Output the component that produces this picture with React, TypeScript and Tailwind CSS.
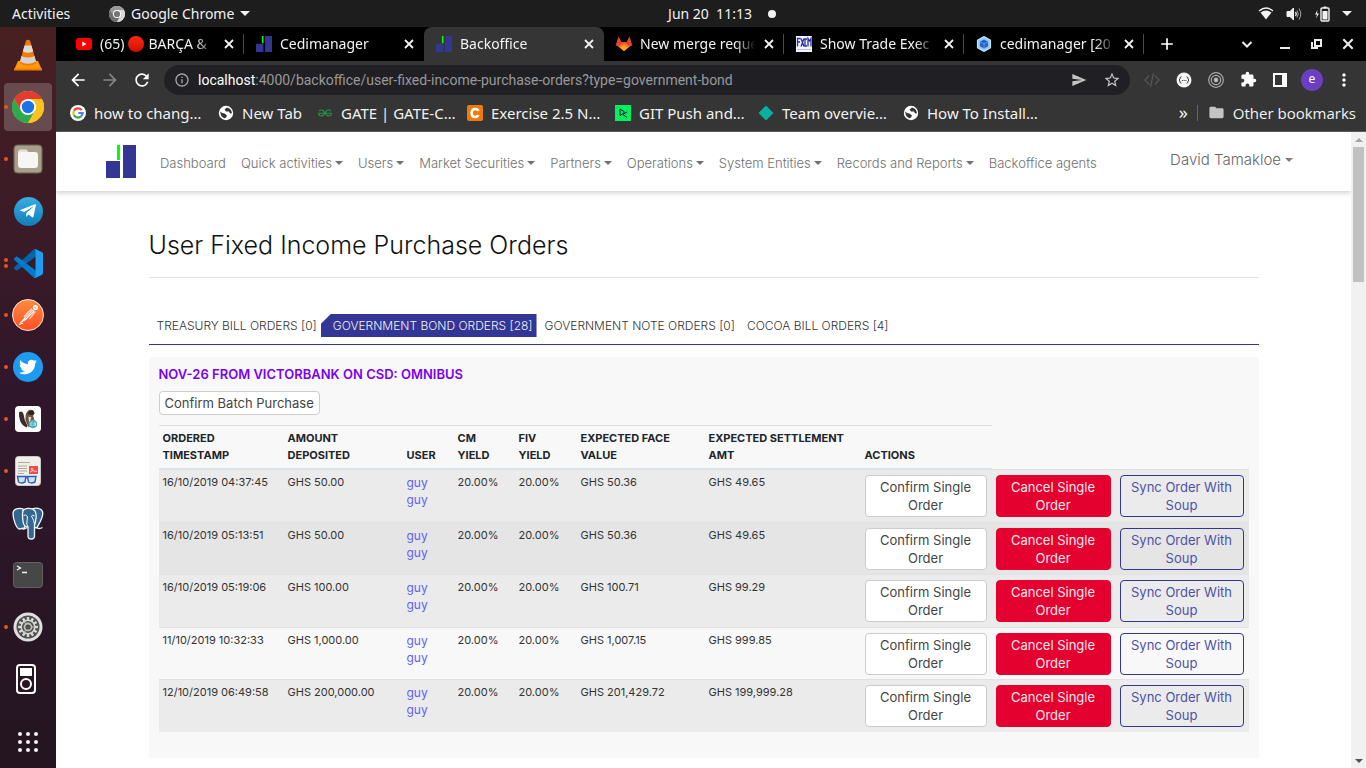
import type { ReactNode } from "react";
import {
  MdAdd,
  MdArrowBack,
  MdArrowForward,
  MdExtension,
  MdFolder,
  MdInfoOutline,
  MdMoreVert,
  MdRefresh,
  MdSend,
  MdStarBorder,
} from "react-icons/md";
import { FaTwitter, FaTelegramPlane } from "react-icons/fa";
import { SiGeeksforgeeks } from "react-icons/si";

/* ---------- drawings ---------- */

function CediLogo({ className }: { className: string }) {
  return (
    <svg viewBox="0 0 30 33" preserveAspectRatio="none" className={className} aria-hidden="true">
      <rect x="0" y="16" width="14" height="17" fill="#333694" />
      <rect x="17" y="0" width="13" height="33" fill="#333694" />
      <rect x="11" y="0" width="3" height="15" fill="#0f0" />
    </svg>
  );
}

function CloseIcon({ className }: { className: string }) {
  return (
    <svg viewBox="0 0 12 12" className={className} stroke="currentColor" strokeWidth="1.800" aria-hidden="true">
      <path d="M2 2 10 10M10 2 2 10" />
    </svg>
  );
}

function ChromeLogo({ className, mono = false }: { className: string; mono?: boolean }) {
  const [red, yellow, green, blue] = mono
    ? ["#9a9a9a", "#d8d8d8", "#6f6f6f", "#777"]
    : ["#e33b2e", "#fcc31e", "#2da94f", "#1a73e8"];
  return (
    <svg viewBox="0 0 48 48" className={className} aria-hidden="true">
      <circle cx="24" cy="24" r="24" fill={yellow} />
      <path d="M24 24 44.8 12A24 24 0 0 0 3.2 12L13.6 30Z" fill={red} />
      <path d="M3.2 12A24 24 0 0 0 24 48L34.4 30 24 24 13.6 30Z" fill={green} />
      <path d="M24 12H44.8A24 24 0 0 1 24 48L34.4 30Z" fill={yellow} />
      <circle cx="24" cy="24" r="12" fill="#fff" />
      <circle cx="24" cy="24" r="9.3" fill={blue} />
    </svg>
  );
}

function VlcIcon() {
  return (
    <svg viewBox="0 0 30 32" className="h-8 w-[30px]" aria-hidden="true">
      <path d="M5 22H25L29 31H1Z" fill="#ff9a0e" />
      <path d="M1 29.5H29V31.5H1Z" fill="#f57c00" />
      <path d="M13 1.500Q15 0 17 1.500L23.500 24Q15 29 6.500 24Z" fill="#f57900" />
      <path d="M11.600 6.500H18.400L20.200 12.500Q15 15 9.800 12.500Z" fill="#dcdcdc" />
      <path d="M8.500 17Q15 20 21.500 17L23 22.500Q15 27 7 22.500Z" fill="#d3d3d3" />
    </svg>
  );
}

function FilesIcon() {
  return (
    <svg viewBox="0 0 30 30" className="size-[30px]" aria-hidden="true">
      <rect x="1" y="1" width="28" height="28" rx="3.500" fill="#9c9480" stroke="#6f6856" />
      <rect x="2" y="2" width="26" height="26" rx="3" fill="#a8a08c" />
      <path d="M6 6.500Q6 5.500 7 5.500H13Q14 5.500 14.500 7H15V12H5V7Z" fill="#e5e0d8" />
      <rect x="5" y="8" width="20" height="16" rx="3" fill="#f8f6f3" />
    </svg>
  );
}

function TelegramIcon() {
  return (
    <span className="flex size-[29px] items-center justify-center rounded-full bg-linear-to-b from-[#37aee2] to-[#0f7dba] text-white">
      <FaTelegramPlane size={18} />
    </span>
  );
}

function VsCodeIcon() {
  return (
    <svg viewBox="0 0 100 100" className="size-[29px]" aria-hidden="true">
      <path d="M96 11 75 .9a6 6 0 0 0-7 1.200L1.300 62.400a4 4 0 0 0 0 6l5.500 5a4 4 0 0 0 5.300.2L93.400 12.200C96 10 100 12 100 15.500V15a6 6 0 0 0-4-4Z" fill="#0065a9" />
      <path d="M96 89 75 99.100a6 6 0 0 1-7-1.200L1.300 37.600a4 4 0 0 1 0-6l5.500-5a4 4 0 0 1 5.300-.2L93.400 87.800C96 90 100 88 100 84.500V85a6 6 0 0 1-4 4Z" fill="#007acc" />
      <path d="M75 99.100a6 6 0 0 1-7-1.200c2.300 2.300 6.300.7 6.300-2.600V4.700c0-3.300-4-5-6.300-2.600a6 6 0 0 1 7-1.200L96.500 11A6 6 0 0 1 100 16.700V83.300a6 6 0 0 1-3.500 5.700Z" fill="#1f9cf0" />
    </svg>
  );
}

function PostmanIcon() {
  return (
    <svg viewBox="0 0 32 32" className="size-8" aria-hidden="true">
      <defs>
        <linearGradient id="postman" x1="0" y1="0" x2="0" y2="1">
          <stop offset="0" stopColor="#ff8c3e" />
          <stop offset="1" stopColor="#ff4f27" />
        </linearGradient>
      </defs>
      <circle cx="16" cy="16" r="15.500" fill="url(#postman)" stroke="#f6e7e0" />
      <circle cx="23.500" cy="8.500" r="2.600" fill="#fff" />
      <path d="M7 25 12.500 18.500 20.500 10.500 22.800 12.300 14.500 20.500Z" fill="#fff" />
      <path d="M12 17.500 20 9.500M17.500 20 23.500 12.500" stroke="#ffe3d6" strokeWidth="1.200" fill="none" />
      <path d="M13.500 19 20.800 12" stroke="#ff6c37" strokeWidth=".8" />
      <path d="M7 25.500 11 24" stroke="#fff" strokeWidth="1.200" />
      <path d="m22.500 8.500 1.800 1" stroke="#ff6c37" strokeWidth="1" />
    </svg>
  );
}

function TwitterIcon() {
  return (
    <span className="flex size-[30px] items-center justify-center rounded-full bg-[#1d9bf0] text-white">
      <FaTwitter size={18} />
    </span>
  );
}

function BeaverIcon() {
  return (
    <svg viewBox="0 0 26 26" className="size-[26px]" aria-hidden="true">
      <rect width="26" height="26" rx="4" fill="#fff" />
      <path d="M4 6.500Q7 4 8.500 8Q9 14 12.500 19.500L12 21.500Q7 20 5 14.500Q3.600 10 4 6.500Z" fill="#3b2c27" />
      <path d="M10.500 14Q10 6 14 4Q19 3 19.500 7.500L18 10Q20 13 18.500 17L14 21.500 12.500 19Z" fill="#6c5142" />
      <path d="M12.500 8Q14 4 18 4.500L19.500 7.500 17 9Z" fill="#2c211e" />
      <path d="M13.500 10.500 16.500 11.500 14 17.500Z" fill="#e8dccf" />
      <circle cx="18" cy="18" r="4.300" fill="#4cb0bb" />
      <path d="M17.600 16.800H15.800V19.400H17.600M19 16.800V19.400H20.600V16.800Z" stroke="#c8eef1" strokeWidth=".8" fill="none" />
    </svg>
  );
}

function DocumentViewerIcon() {
  return (
    <svg viewBox="0 0 26 30" className="h-[30px] w-[26px]" aria-hidden="true">
      <rect x=".5" y=".5" width="25" height="29" rx="3" fill="#f1efec" stroke="#cbc9c6" />
      <path d="M3 6.500H15M3 10H12M3 12.500H12M3 15H12M3 17.500H9" stroke="#b4ab97" strokeWidth="1.100" />
      <rect x="14" y="10" width="9" height="8" fill="#ee4c44" />
      <path d="M15 16Q17 16 18 14Q18 11.500 16.200 12.500Q16 15 19 15L22 15.500" stroke="#ffd0cc" fill="none" strokeWidth=".9" />
      <path d="M2.500 20.500H11L10 26Q6 28 3.500 26ZM12.500 20.500H21L20 26Q16 28 13.500 26Z" fill="#cfe0f3" stroke="#2c62b4" strokeWidth="1.400" />
      <path d="M10.500 21.500H13" stroke="#2c62b4" strokeWidth="1.500" />
    </svg>
  );
}

function ElephantIcon() {
  return (
    <svg viewBox="0 0 32 33" className="h-[33px] w-8" aria-hidden="true">
      <g fill="#336791" stroke="#f4f7fa" strokeWidth="1.300" strokeLinejoin="round">
        <path d="M8 22C4 22.500 1 11 1 6.500C1 1.500 7 .8 11 1.800L13 20C12 22 9 21 8 22Z" />
        <path d="M20 2C26 0 30.500 2 30.800 6C31 11 27 17 25 20.500L21 21Z" />
        <path d="M11 4C12 1 20 0 23 4C25 7 24 14 22.500 18V29C22.500 33 16 33 16 29V20C13.500 20 11.500 18 11 14.500C10.500 11 10 7 11 4Z" />
      </g>
      <path d="M24 20.500Q27 22.500 30.500 20.500M9.500 21.500Q12 23 15 20.500" stroke="#f4f7fa" strokeWidth="1.400" fill="none" />
      <path d="M11.500 8.500Q13.500 7 15.500 9.500L15 14Q14 17 16 20M22.500 9Q20 7.500 19.500 9Q22.500 14 22.500 18" stroke="#f4f7fa" strokeWidth="1" fill="none" />
    </svg>
  );
}

function TerminalIcon() {
  return (
    <svg viewBox="0 0 30 26" className="h-[26px] w-[30px]" aria-hidden="true">
      <rect x=".5" y=".5" width="29" height="25" rx="3" fill="#474747" stroke="#616161" />
      <path d="m4 4 3.500 2L4 8M9 10.500H14" stroke="#f2f2f2" strokeWidth="1.300" fill="none" />
    </svg>
  );
}

const teeth = Array.from({ length: 12 }, (_, i) => i * 30);

function SettingsIcon() {
  return (
    <svg viewBox="0 0 30 30" className="size-[30px]" aria-hidden="true">
      <circle cx="15" cy="15" r="14.500" fill="#e0e0de" />
      <circle cx="15" cy="15" r="11.500" fill="#4f4f4f" />
      {teeth.map((angle) => (
        <rect key={angle} x="13.800" y="5" width="2.400" height="3.500" fill="#d8d8d6" transform={`rotate(${angle} 15 15)`} />
      ))}
      <circle cx="15" cy="15" r="6.800" fill="none" stroke="#d8d8d6" strokeWidth="1.500" />
      <circle cx="15" cy="15" r="3.500" fill="none" stroke="#bdbdbb" strokeWidth="1.800" />
      <path d="M14 12.500 18 15 14 17.500Z" fill="#4f4f4f" />
      <path d="M18 15H22M13 12 11 9.500M13 18 11 20.500" stroke="#bdbdbb" strokeWidth="1.200" />
    </svg>
  );
}

function PlayerIcon() {
  return (
    <svg viewBox="0 0 20 30" className="-ml-1 h-[30px] w-5" aria-hidden="true">
      <rect x="1" y="1" width="18" height="28" rx="3" fill="none" stroke="#fff" strokeWidth="2" />
      <rect x="4" y="4" width="12" height="8" fill="#fff" />
      <circle cx="10" cy="20" r="5" fill="none" stroke="#fff" strokeWidth="2" />
    </svg>
  );
}

function AppsIcon() {
  return (
    <svg viewBox="0 0 20 20" className="size-5" fill="#f5f5f5" aria-hidden="true">
      {[2, 10, 18].map((x) => [2, 10, 18].map((y) => <circle key={`${x}-${y}`} cx={x} cy={y} r="2" />))}
    </svg>
  );
}

function YoutubeIcon() {
  return (
    <svg viewBox="0 0 16 12" className="h-3 w-4 shrink-0" aria-hidden="true">
      <rect width="16" height="12" rx="3" fill="#f00" />
      <path d="M6.300 3.600V8.400L10.500 6Z" fill="#fff" />
    </svg>
  );
}

function GitlabIcon() {
  return (
    <svg viewBox="0 0 16 16" className="size-4 shrink-0" aria-hidden="true">
      <path d="M8 15 0 9 2.700.8 5 6H11L13.300.8 16 9Z" fill="#fc6d26" />
      <path d="M0 9 2.700.8 5 6H11L13.300.8 16 9 14 10.300 8 6.500 2 10.300Z" fill="#e24329" />
      <path d="M4 11.500 8 8.800 12 11.500 8 15.300Z" fill="#fca326" />
    </svg>
  );
}

function FxcmIcon() {
  return (
    <svg viewBox="0 0 16 16" className="size-4 shrink-0" aria-hidden="true">
      <rect width="16" height="16" fill="#f4f6ff" />
      <path d="M1.500 10.500V2.500H4.500M1.500 6H4M5 2.500 8 10.500M8 2.500 5 10.500M11 3H9V10H11M12 10.500V2.500L13.500 5 15 2.500V10.500" stroke="#2a31a8" strokeWidth="1.300" fill="none" />
      <path d="M1 13.500H15" stroke="#b9bfe6" strokeWidth="1" />
    </svg>
  );
}

function WebpackIcon() {
  return (
    <svg viewBox="0 0 16 16" className="size-4 shrink-0" aria-hidden="true">
      <path d="M8 0 15 4V12L8 16 1 12V4Z" fill="#8fcbfa" />
      <path d="M8 .5 14.600 4.200V11.800L8 15.500 1.400 11.800V4.200Z" stroke="#d9f1fd" strokeWidth=".8" fill="none" />
      <path d="M8 3.500 12 5.800V10.200L8 12.500 4 10.200V5.800Z" fill="#2463c4" />
      <path d="M4 5.800 8 8 12 5.800M8 8V12.500" stroke="#7fa7f0" strokeWidth=".7" fill="none" />
    </svg>
  );
}

function GoogleIcon() {
  return (
    <svg viewBox="0 0 16 16" className="size-4 shrink-0" aria-hidden="true">
      <circle cx="8" cy="8" r="8" fill="#fff" />
      <g fill="none" strokeWidth="2.200">
        <path d="M11.600 5A4.600 4.600 0 0 0 4 5.700" stroke="#ea4335" />
        <path d="M4 5.700A4.600 4.600 0 0 0 4 10.300" stroke="#fbbc05" />
        <path d="M4 10.300A4.600 4.600 0 0 0 10.900 11.500" stroke="#34a853" />
        <path d="M10.900 11.500A4.600 4.600 0 0 0 12.600 8H8.300" stroke="#4285f4" />
      </g>
    </svg>
  );
}

function GlobeIcon() {
  return (
    <svg viewBox="0 0 16 16" className="size-4 shrink-0" aria-hidden="true">
      <circle cx="8" cy="8" r="7.200" fill="#fff" />
      <path d="M2 6.500Q4 8.500 6.500 8.500L9 10.500 8 12.500 6.500 13.200Q3 12 2.500 8.500ZM9 2.500 6.500 4.500 8 6.500H11L12 8.500 14 8.200Q13.500 4.500 11.500 3.500Z" fill="#353535" />
    </svg>
  );
}

function CodecademyIcon() {
  return (
    <svg viewBox="0 0 16 16" className="size-4 shrink-0" aria-hidden="true">
      <rect width="16" height="16" rx="2" fill="#ef7c0a" />
      <path d="M11.500 5.800Q10.500 4 8.200 4Q4.600 4 4.600 8T8.200 12Q10.500 12 11.500 10.200" stroke="#fff" strokeWidth="2.600" fill="none" />
    </svg>
  );
}

function DatacampIcon() {
  return (
    <svg viewBox="0 0 16 16" className="size-4 shrink-0" aria-hidden="true">
      <rect width="16" height="16" fill="#03ef62" />
      <path d="M5 10.500V4L9 6.500V8L5 10.500M12 7 8 9.500 12 12.500" stroke="#05192d" strokeWidth="1" fill="none" />
    </svg>
  );
}

function DiamondIcon() {
  return (
    <svg viewBox="0 0 16 16" className="size-4 shrink-0" aria-hidden="true">
      <path d="M8 .6 15.400 8 8 15.400.6 8Z" fill="#06b1a0" />
    </svg>
  );
}

function Caret({ className = "" }: { className?: string }) {
  return (
    <svg viewBox="0 0 8 4" className={`h-1 w-2 shrink-0 ${className}`} fill="currentColor" aria-hidden="true">
      <path d="M0 0H8L4 4Z" />
    </svg>
  );
}

/* ---------- desktop ---------- */

function TopBar() {
  return (
    <header className="grid h-[27px] shrink-0 grid-cols-[1fr_auto_1fr] items-center bg-[#1d1d1d] px-3 text-sm text-[#f2f2f2]">
      <div className="flex items-center">
        <button type="button" className="w-[97px] text-left">Activities</button>
        <button type="button" className="flex items-center gap-[6px]">
          <ChromeLogo className="size-4" mono />
          Google Chrome
          <svg viewBox="0 0 10 5" className="h-[5px] w-[10px]" fill="currentColor" aria-hidden="true">
            <path d="M0 0H10L5 5Z" />
          </svg>
        </button>
      </div>
      <button type="button" className="flex items-center gap-4 pl-[78px]">
        <span className="whitespace-pre">Jun 20  11:13</span>
        <span className="size-2 rounded-full bg-[#f2f2f2]" />
      </button>
      <button type="button" aria-label="System menu" className="flex items-center gap-3 justify-self-end pr-[2px]">
        <svg viewBox="0 0 16 13" className="h-[13px] w-4" aria-hidden="true">
          <path d="M1 4Q8-2 15 4" stroke="#f2f2f2" strokeWidth="1.300" fill="none" />
          <path d="M2.500 5.500Q8 1.500 13.500 5.500L8 12.500Z" fill="#f2f2f2" />
        </svg>
        <svg viewBox="0 0 16 14" className="h-[14px] w-4" fill="none" stroke="#f2f2f2" aria-hidden="true">
          <path d="M1 4.500H4L7.500 1V13L4 9.500H1Z" fill="#f2f2f2" />
          <path d="M9.500 5Q11 7 9.500 9" strokeWidth="1.300" />
          <path d="M11 3.500Q13.500 7 11 10.500M13 1.500Q16.500 7 13 12.500" stroke="#a5a5a5" />
        </svg>
        <svg viewBox="0 0 16 16" className="size-4" aria-hidden="true">
          <path d="M3.500 4 1 8.500H3L2 12.500 5 7.500H3Z" fill="#f2f2f2" />
          <rect x="7" y="2" width="8" height="13" rx="1" fill="none" stroke="#f2f2f2" strokeWidth="1.400" />
          <path d="M9.500.5H12.500V2H9.500ZM8.500 5H13.500V13.500H8.500Z" fill="#f2f2f2" />
        </svg>
        <svg viewBox="0 0 10 5" className="h-[5px] w-[10px]" fill="currentColor" aria-hidden="true">
          <path d="M0 0H10L5 5Z" />
        </svg>
      </button>
    </header>
  );
}

type DockItem = { label: string; icon: ReactNode; windows?: number; focused?: boolean };

const dockItems: DockItem[] = [
  { label: "VLC media player", icon: <VlcIcon /> },
  { label: "Google Chrome", icon: <ChromeLogo className="size-8" />, windows: 1, focused: true },
  { label: "Files", icon: <FilesIcon />, windows: 1 },
  { label: "Telegram", icon: <TelegramIcon /> },
  { label: "Visual Studio Code", icon: <VsCodeIcon />, windows: 2 },
  { label: "Postman", icon: <PostmanIcon />, windows: 1 },
  { label: "Twitter", icon: <TwitterIcon />, windows: 1 },
  { label: "DBeaver", icon: <BeaverIcon />, windows: 1 },
  { label: "Document Viewer", icon: <DocumentViewerIcon />, windows: 1 },
  { label: "pgAdmin", icon: <ElephantIcon /> },
  { label: "Terminal", icon: <TerminalIcon /> },
  { label: "Settings", icon: <SettingsIcon />, windows: 1 },
  { label: "Media player", icon: <PlayerIcon /> },
];

function Dock() {
  return (
    <aside className="flex w-14 shrink-0 flex-col bg-linear-to-b from-[#482021] via-[#30162b] via-50% to-[#241520] pt-[2px]">
      {dockItems.map((item) => (
        <button key={item.label} type="button" aria-label={item.label} className="relative flex h-[52px] shrink-0 items-center justify-center px-1">
          <span className="absolute left-1 flex flex-col gap-[2px]">
            {Array.from({ length: item.windows ?? 0 }, (_, i) => (
              <span key={i} className="size-1 rounded-full bg-[#e95420]" />
            ))}
          </span>
          <span className={item.focused ? "flex size-12 items-center justify-center rounded bg-white/20" : "flex size-12 items-center justify-center"}>
            {item.icon}
          </span>
        </button>
      ))}
      <button type="button" aria-label="Show applications" className="mt-auto flex h-[52px] items-center justify-center">
        <AppsIcon />
      </button>
    </aside>
  );
}

/* ---------- browser ---------- */

type Tab = { title: ReactNode; icon: ReactNode; active?: boolean; divider?: boolean };

const tabs: Tab[] = [
  {
    title: (
      <span className="flex items-center gap-1">
        (65) <span className="size-4 shrink-0 rounded-full bg-linear-to-b from-[#ff2a12] to-[#d00a00]" /> BARÇA &amp;
      </span>
    ),
    icon: <YoutubeIcon />,
    divider: true,
  },
  { title: "Cedimanager", icon: <CediLogo className="size-4" /> },
  { title: "Backoffice", icon: <CediLogo className="size-4" />, active: true },
  { title: "New merge reque", icon: <GitlabIcon />, divider: true },
  { title: "Show Trade Exec", icon: <FxcmIcon />, divider: true },
  { title: "cedimanager [20", icon: <WebpackIcon />, divider: true },
];

function TabStrip() {
  return (
    <div className="flex h-[34px] shrink-0 bg-black pl-2">
      {tabs.map((tab, i) => (
        <div
          key={i}
          className={
            tab.active
              ? "relative flex w-[180px] items-center gap-2 rounded-t-lg bg-[#353535] pr-[9px] pl-3"
              : "relative flex w-[180px] items-center gap-2 pr-[9px] pl-3"
          }
        >
          {tab.icon}
          <span className="-mr-2 min-w-0 flex-1 overflow-hidden mask-r-from-80% mask-r-to-97% text-sm whitespace-nowrap text-[#f2f2f2]">
            {tab.title}
          </span>
          <button type="button" aria-label="Close tab" className="ml-1 text-[#f2f2f2]">
            <CloseIcon className="size-3" />
          </button>
          {tab.divider && <span className="absolute top-[7px] right-0 h-5 w-px bg-[#4a4a4a]" />}
        </div>
      ))}
      <button type="button" aria-label="New tab" className="ml-[13px] text-white">
        <MdAdd size={20} />
      </button>
      <div className="ml-auto flex items-center gap-4 pr-[11px] text-[#ececec]">
        <button type="button" aria-label="Search tabs" className="mr-[6px]">
          <svg viewBox="0 0 16 16" className="size-4" fill="none" stroke="currentColor" strokeWidth="2" aria-hidden="true">
            <path d="M3.500 6 8 10.500 12.500 6" />
          </svg>
        </button>
        <button type="button" aria-label="Minimize">
          <svg viewBox="0 0 16 16" className="size-4" aria-hidden="true">
            <path d="M3 12H13" stroke="currentColor" strokeWidth="2" />
          </svg>
        </button>
        <button type="button" aria-label="Restore">
          <svg viewBox="0 0 16 16" className="size-4" fill="none" stroke="currentColor" strokeWidth="2" aria-hidden="true">
            <path d="M6 4H12V10H6Z M3 6V12H9" />
          </svg>
        </button>
        <button type="button" aria-label="Close window">
          <CloseIcon className="size-[14px]" />
        </button>
      </div>
    </div>
  );
}

const toolButton = "flex size-8 items-center justify-center";

function Toolbar() {
  return (
    <div className="flex h-[37px] shrink-0 items-center pr-[6px] pl-[6px] text-white">
      <button type="button" aria-label="Back" className={toolButton}><MdArrowBack size={20} /></button>
      <button type="button" aria-label="Forward" className="flex size-8 items-center justify-center text-[#858585]"><MdArrowForward size={20} /></button>
      <button type="button" aria-label="Reload" className={toolButton}><MdRefresh size={20} /></button>
      <div className="ml-[6px] flex h-[30px] min-w-0 flex-1 items-center gap-2 rounded-full bg-[#202024] pr-[9px] pl-[10px]">
        <MdInfoOutline size={16} className="shrink-0 text-[#a5a5a8]" />
        <div className="min-w-0 flex-1 truncate font-['Roboto',sans-serif] text-sm text-[#98989b]">
          <span className="text-white">localhost</span>:4000/backoffice/user-fixed-income-purchase-orders?type=government-bond
        </div>
        <button type="button" aria-label="Share page" className="mr-2 text-[#c4c4c4]"><MdSend size={16} /></button>
        <button type="button" aria-label="Bookmark page" className="text-[#c4c4c4]"><MdStarBorder size={18} /></button>
      </div>
      <div className="ml-[6px] flex items-center">
        <button type="button" aria-label="Source viewer" className="flex size-8 items-center justify-center text-[#555]">
          <svg viewBox="0 0 16 16" className="size-4" fill="none" stroke="currentColor" strokeWidth="1.300" aria-hidden="true">
            <path d="M5 3.500 1 8 5 12.500M11 3.500 15 8 11 12.500M9.500 1 6.500 15" />
          </svg>
        </button>
        <button type="button" aria-label="JSON viewer" className={toolButton}>
          <svg viewBox="0 0 16 16" className="size-4" aria-hidden="true">
            <circle cx="8" cy="8" r="7.500" fill="#f5f5f5" />
            <path d="M5.500 4.800Q4 4.800 4 6V7L3 8 4 9V10Q4 11.200 5.500 11.200M10.500 4.800Q12 4.800 12 6V7L13 8 12 9V10Q12 11.200 10.500 11.200" stroke="#444" strokeWidth="1" fill="none" />
            <path d="M5.800 8.500H10.400" stroke="#444" strokeWidth="1" strokeDasharray="1 .8" />
          </svg>
        </button>
        <button type="button" aria-label="Screen reader" className={toolButton}>
          <svg viewBox="0 0 16 16" className="size-4" fill="none" stroke="#a8a8a8" strokeWidth="1.200" aria-hidden="true">
            <circle cx="8" cy="8" r="7.300" />
            <circle cx="8" cy="8" r="4.700" />
            <circle cx="8" cy="8" r="1.800" fill="#c8c8c8" />
          </svg>
        </button>
        <button type="button" aria-label="Extensions" className={toolButton}><MdExtension size={17} /></button>
        <button type="button" aria-label="Side panel" className={toolButton}>
          <svg viewBox="0 0 14 14" className="size-[14px]" aria-hidden="true">
            <rect x="1" y="1" width="12" height="12" fill="none" stroke="#fff" strokeWidth="2" />
            <rect x="9" y="1" width="4" height="12" fill="#fff" />
          </svg>
        </button>
        <button type="button" aria-label="Profile" className={toolButton}>
          <span className="flex size-[22px] items-center justify-center rounded-full bg-[#6b3fbf] pb-[2px] text-xs">e</span>
        </button>
        <button type="button" aria-label="Menu" className={toolButton}><MdMoreVert size={20} /></button>
      </div>
    </div>
  );
}

const bookmarks = [
  { label: "how to chang…", icon: <GoogleIcon />, width: "w-[148px]" },
  { label: "New Tab", icon: <GlobeIcon />, width: "w-[99px]" },
  { label: "GATE | GATE-C…", icon: <SiGeeksforgeeks size={16} className="shrink-0 px-px text-[#2f8d46]" />, width: "w-[150px]" },
  { label: "Exercise 2.5 N…", icon: <CodecademyIcon />, width: "w-[148px]" },
  { label: "GIT Push and…", icon: <DatacampIcon />, width: "w-[143px]" },
  { label: "Team overvie…", icon: <DiamondIcon />, width: "w-[145px]" },
  { label: "How To Install…", icon: <GlobeIcon />, width: "w-[148px]" },
];

function BookmarksBar() {
  return (
    <nav aria-label="Bookmarks" className="flex h-[34px] shrink-0 items-center border-b border-[#5a5a5a] pr-[10px] pb-1 pl-[14px] text-[15px] leading-[18px] text-[#f2f2f2]">
      {bookmarks.map((b, i) => (
        <a key={i} href="#" className={`flex items-center gap-2 whitespace-nowrap ${b.width}`}>
          {b.icon}
          {b.label}
        </a>
      ))}
      <div className="ml-auto flex items-center">
        <button type="button" aria-label="More bookmarks" className="mr-[9px] pb-[2px] text-lg leading-4">»</button>
        <span className="mr-[10px] h-4 w-px bg-[#666]" />
        <a href="#" className="flex items-center gap-2 whitespace-nowrap">
          <MdFolder size={17} className="text-[#c4c4c4]" />
          <span className="font-['Open_Sans',sans-serif]">Other bookmarks</span>
        </a>
      </div>
    </nav>
  );
}

function Scrollbar() {
  return (
    <div aria-hidden="true" className="flex w-[15px] shrink-0 flex-col items-center bg-[#f1f1f1] pt-[6px] pb-[5px]">
      <Caret className="rotate-180 text-[#a3a3a3]" />
      <div className="mt-[5px] h-[135px] w-[11px] bg-[#c1c1c1]" />
      <Caret className="mt-auto text-[#505050]" />
    </div>
  );
}

/* ---------- page ---------- */

const navItems = [
  { label: "Dashboard" },
  { label: "Quick activities", menu: true },
  { label: "Users", menu: true },
  { label: "Market Securities", menu: true },
  { label: "Partners", menu: true },
  { label: "Operations", menu: true },
  { label: "System Entities", menu: true },
  { label: "Records and Reports", menu: true },
  { label: "Backoffice agents" },
];

function SiteHeader() {
  return (
    <header className="flex h-[59px] shrink-0 items-center bg-white pr-[58px] pl-[50px] shadow-[0_2px_5px_rgba(0,0,0,0.18)]">
      <a href="#" aria-label="Home" className="mr-6"><CediLogo className="h-[33px] w-[30px]" /></a>
      <nav aria-label="Main" className="flex items-center gap-[15px] pt-1 text-[13px] font-light text-[#707070]">
        {navItems.map((item) => (
          <a key={item.label} href="#" className="flex items-center gap-[3px] whitespace-nowrap">
            {item.label}
            {item.menu && <Caret className="mb-[2px]" />}
          </a>
        ))}
      </nav>
      <button type="button" className="ml-auto flex items-center gap-1 pb-[2px] text-[15px] font-light text-[#666]">
        David Tamakloe
        <Caret className="mb-[2px] text-[#808080]" />
      </button>
    </header>
  );
}

const orderTabs = [
  "TREASURY BILL ORDERS [0]",
  "GOVERNMENT BOND ORDERS [28]",
  "GOVERNMENT NOTE ORDERS [0]",
  "COCOA BILL ORDERS [4]",
];

function OrderTabs() {
  return (
    <nav aria-label="Order types" className="mt-9 flex border-b border-[#333694] pb-[7px] text-xs leading-[23px] font-light text-[#333]">
      {orderTabs.map((label, i) => (
        <a
          key={label}
          href="#"
          className={
            i === 1
              ? "bg-[#333694] pr-1 pl-3 whitespace-nowrap text-[#f2f2fa] [clip-path:polygon(10px_0,100%_0,100%_100%,0_100%,0_10px)]"
              : "pr-1 pl-2 whitespace-nowrap"
          }
        >
          {label}
        </a>
      ))}
    </nav>
  );
}

const orders = [
  { time: "16/10/2019 04:37:45", amount: "GHS 50.00", face: "GHS 50.36", settle: "GHS 49.65", bg: "bg-[#ebebeb]" },
  { time: "16/10/2019 05:13:51", amount: "GHS 50.00", face: "GHS 50.36", settle: "GHS 49.65", bg: "bg-[#e5e5e5]" },
  { time: "16/10/2019 05:19:06", amount: "GHS 100.00", face: "GHS 100.71", settle: "GHS 99.29", bg: "bg-[#ebebeb]" },
  { time: "11/10/2019 10:32:33", amount: "GHS 1,000.00", face: "GHS 1,007.15", settle: "GHS 999.85", bg: "bg-[#f8f8f8]" },
  { time: "12/10/2019 06:49:58", amount: "GHS 200,000.00", face: "GHS 201,429.72", settle: "GHS 199,999.28", bg: "bg-[#ebebeb]" },
];

const columns = [
  { label: "ORDERED\nTIMESTAMP", width: "w-[125px]" },
  { label: "AMOUNT\nDEPOSITED", width: "w-[119px]" },
  { label: "USER", width: "w-[51px]" },
  { label: "CM\nYIELD", width: "w-[61px]" },
  { label: "FIV\nYIELD", width: "w-[62px]" },
  { label: "EXPECTED FACE\nVALUE", width: "w-[128px]" },
  { label: "EXPECTED SETTLEMENT\nAMT", width: "w-[156px]" },
  { label: "ACTIONS", width: "w-[131px]" },
];

const cell = "border-t border-[#dee2e6] px-1 py-1";
const actionCell = "border-t border-[#dee2e6] pt-[5px] pr-[5px] pl-1";
const actionButton = "block h-[42px] w-full rounded border px-1 text-[13px] leading-[18px]";

function OrdersTable() {
  return (
    <table className="mt-[10px] w-full table-fixed border-separate border-spacing-0 text-[11px] leading-[17px] text-[#333]">
      <thead>
        <tr>
          {columns.map((c) => (
            <th key={c.label} scope="col" className={`border-y border-[#dee2e6] px-1 py-1 text-left align-bottom font-bold whitespace-pre-line text-[#212529] ${c.width}`}>
              {c.label}
            </th>
          ))}
          <td className="w-[124px]" />
          <td className="w-[133px]" />
        </tr>
      </thead>
      <tbody>
        {orders.map((o) => (
          <tr key={o.time} className={`align-top odd:h-[53px] even:h-[52px] ${o.bg}`}>
            <td className={cell}>{o.time}</td>
            <td className={cell}>{o.amount}</td>
            <td className={cell}>
              <a href="#" className="block w-6 text-xs leading-[17px] text-[#5f63f5]">guy guy</a>
            </td>
            <td className={cell}>20.00%</td>
            <td className={cell}>20.00%</td>
            <td className={cell}>{o.face}</td>
            <td className={cell}>{o.settle}</td>
            <td className={actionCell}>
              <button type="button" className={`${actionButton} border-[#ccc] bg-white text-[#444]`}>
                Confirm Single<br />Order
              </button>
            </td>
            <td className={actionCell}>
              <button type="button" className={`${actionButton} border-[#e4002f] bg-[#e4002f] text-[#ffe9ed]`}>
                Cancel Single<br />Order
              </button>
            </td>
            <td className={actionCell}>
              <button type="button" className={`${actionButton} border-[#333694] text-[#4d52a8]`}>
                Sync Order With<br />Soup
              </button>
            </td>
          </tr>
        ))}
      </tbody>
    </table>
  );
}

export default function App() {
  return (
    <div className="flex h-screen flex-col overflow-hidden bg-white font-['Noto_Sans',sans-serif]">
      <TopBar />
      <div className="flex min-h-0 flex-1">
        <Dock />
        <div className="flex min-w-0 flex-1 flex-col">
          <TabStrip />
          <div className="flex shrink-0 flex-col bg-[#353535]">
            <Toolbar />
            <BookmarksBar />
          </div>
          <div className="flex min-h-0 flex-1">
            <div className="flex min-w-0 flex-1 flex-col overflow-hidden bg-white font-['Inter',sans-serif]">
              <SiteHeader />
              <main className="mx-auto w-full max-w-[1110px] pt-9">
                <h1 className="border-b border-[#e3e3e3] pb-[14px] text-[25px] leading-9 font-light text-[#111]">
                  User Fixed Income Purchase Orders
                </h1>
                <OrderTabs />
                <section className="mt-3 bg-[#f8f8f8] px-[10px] pt-2 pb-[26px]">
                  <h2 className="text-[13px] leading-[18px] font-semibold text-[#7a00f5]">
                    NOV-26 FROM VICTORBANK ON CSD: OMNIBUS
                  </h2>
                  <button type="button" className="mt-2 block h-6 rounded border border-[#ccc] bg-white px-[5px] text-[13px] leading-4 text-[#444]">
                    Confirm Batch Purchase
                  </button>
                  <OrdersTable />
                </section>
              </main>
            </div>
            <Scrollbar />
          </div>
        </div>
      </div>
    </div>
  );
}
